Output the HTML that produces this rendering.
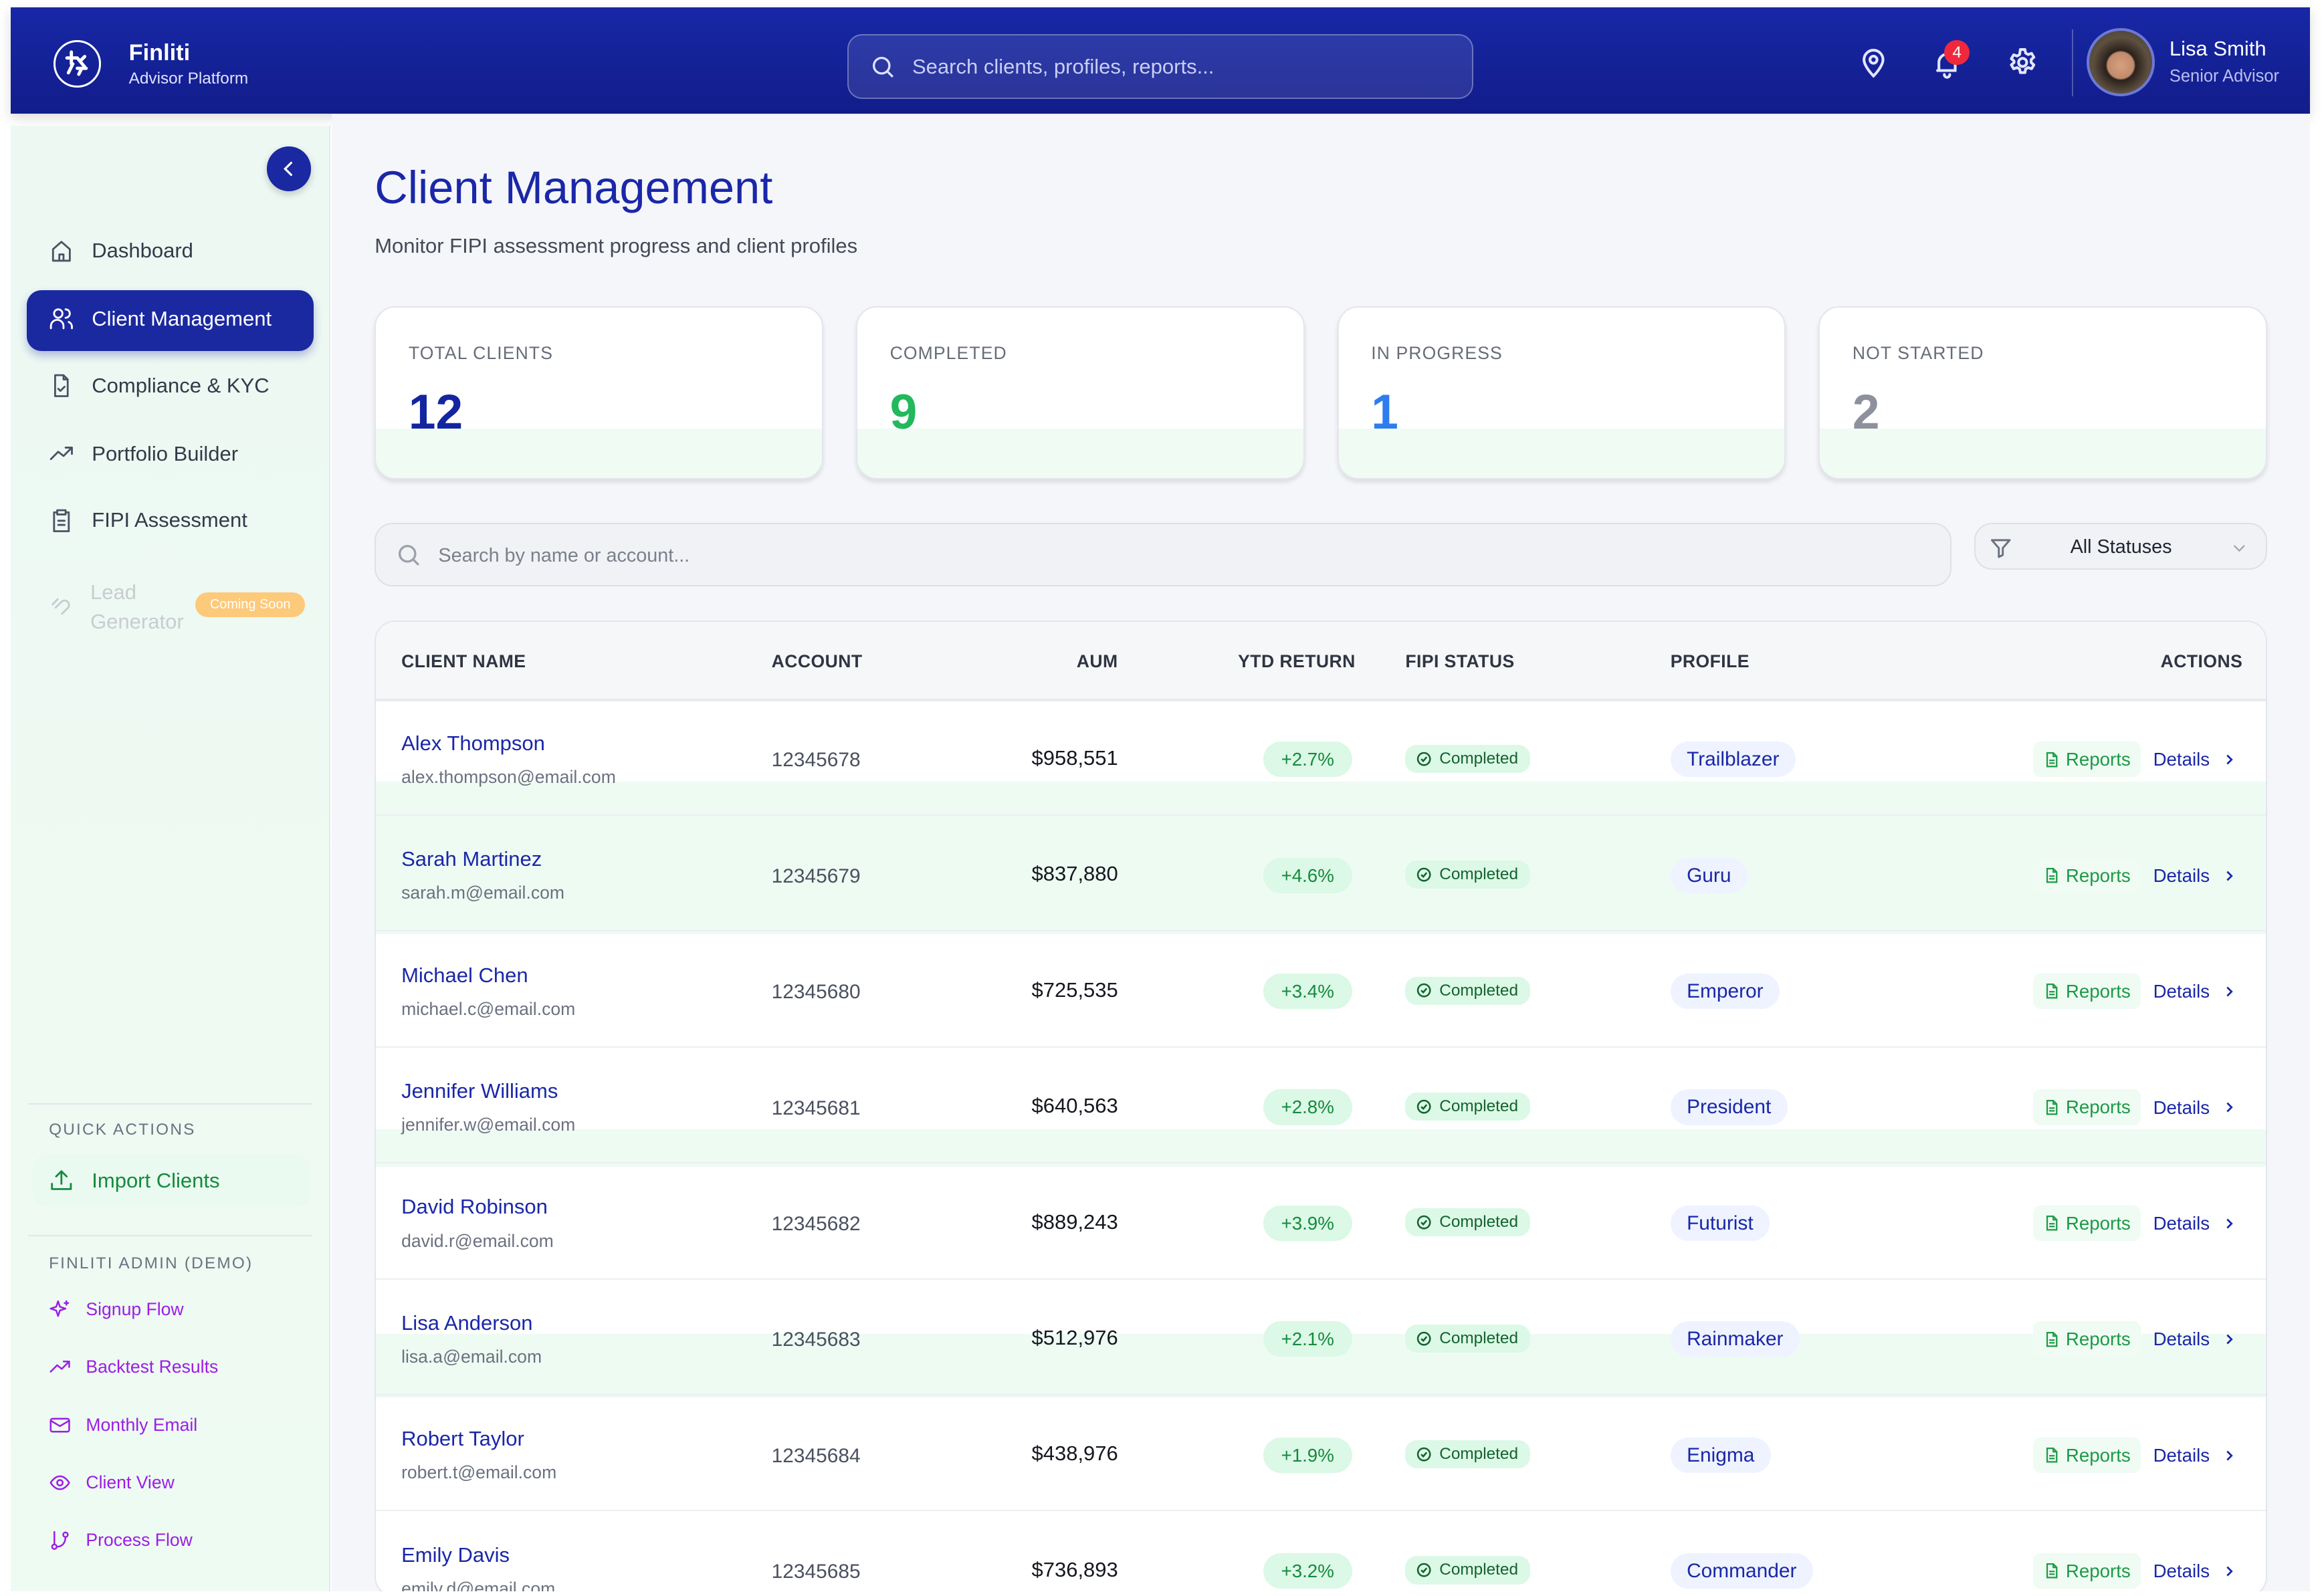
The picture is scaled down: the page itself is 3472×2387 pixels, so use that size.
<!DOCTYPE html>
<html><head><meta charset="utf-8"><style>
*{box-sizing:border-box;margin:0;padding:0}
html,body{width:3472px;height:2387px;overflow:hidden;background:#fff}
#r{zoom:2.21429;position:relative;width:1568px;height:1078px;font-family:"Liberation Sans",sans-serif;overflow:hidden}
.a{position:absolute}
.hdr{left:7px;top:5px;width:1553px;height:72px;background:linear-gradient(180deg,#1727a6,#121d8a);box-shadow:0 3px 8px rgba(0,0,0,.15)}
.side{left:7px;top:85px;width:216px;height:990px;background:linear-gradient(180deg,#edf8f3,#eefbf2);border-right:1px solid #e6e9ee}
.main{left:224px;top:77px;width:1336px;height:998px;background:#f5f6fa}
.nav{left:33px;font-size:14px;color:#333a48;display:flex;align-items:center;gap:12px}
.nav svg{width:17px;height:17px;fill:none;stroke:#4b5263;stroke-width:1.8;stroke-linecap:round;stroke-linejoin:round}
.adm{left:33px;font-size:12px;color:#9b1ee6;display:flex;align-items:center;gap:10px}
.adm svg{width:15px;height:15px;fill:none;stroke:#9b1ee6;stroke-width:1.8;stroke-linecap:round;stroke-linejoin:round}
.card{top:207px;width:303px;height:117px;border:1px solid #e3e6ec;border-radius:14px;background:linear-gradient(180deg,#fff 0,#fff 71%,#effbf3 71%);box-shadow:0 2px 3px rgba(0,0,0,.1);overflow:hidden}
.card .l{position:absolute;left:22px;top:24px;font-size:12px;color:#666c78;letter-spacing:.5px}
.card .n{position:absolute;left:22px;top:52px;font-size:33px;font-weight:bold}
.th{top:440px;font-size:12px;font-weight:bold;color:#2f3542;letter-spacing:.2px}
.row{left:254px;width:1276px;height:78px}
.nm{font-size:14px;color:#1a27a8}
.em{font-size:12px;color:#6b7180}
.ac{font-size:13.5px;color:#4b5060}
.aum{font-size:14px;color:#14171f}
.ytd{height:24px;border-radius:12px;background:#dcf8e6;color:#158a3e;font-size:12.5px;line-height:24px;text-align:center;width:60px}
.st{height:19px;border-radius:8px;background:#dcf8e6;color:#14632f;font-size:11px;line-height:19px;padding:0 8px 0 7px;display:flex;align-items:center;gap:5px}
.pf{height:24px;border-radius:12px;background:#eef3ff;color:#1a27a8;font-size:13.5px;line-height:24px;padding:0 11px}
.rp{height:24px;border-radius:5px;background:#effbf3;color:#1c9a46;font-size:12.5px;line-height:24px;padding:0 7px;display:flex;align-items:center;gap:4px}
.dt{font-size:12.5px;color:#1a27a8;display:flex;align-items:center;gap:8px}
</style></head><body><div id="r">
<div class="a hdr"></div>
<div class="a" style="left:36px;top:27px;width:32px;height:32px;border:1.5px solid #fff;border-radius:50%"></div>
<svg class="a" style="left:40px;top:31px" width="24" height="24" viewBox="0 0 24 24"><path d="M8 4v8M5 8h7M12 8l5 6M9 12l-3 6M14 10l3-3M12 15h6M15 15l-2 4" stroke="#fff" stroke-width="2.2" fill="none" stroke-linecap="round"/></svg>
<div class="a" style="left:87px;top:27px;font-size:15.5px;font-weight:bold;color:#fff">Finliti</div>
<div class="a" style="left:87px;top:47px;font-size:11px;color:#dfe3ff">Advisor Platform</div>
<div class="a" style="left:572px;top:23px;width:423px;height:44px;border:1px solid rgba(255,255,255,.3);background:rgba(255,255,255,.1);border-radius:10px"></div>
<svg class="a" style="left:587px;top:36px" width="18" height="18" viewBox="0 0 24 24" fill="none" stroke="#dfe3ff" stroke-width="2"><circle cx="11" cy="11" r="7"/><path d="M16 16l5 5"/></svg>
<div class="a" style="left:616px;top:37px;font-size:14px;color:#c9cef5">Search clients, profiles, reports...</div>
<svg class="a" style="left:1254px;top:31px" width="22" height="22" viewBox="0 0 24 24" fill="none" stroke="#e3e6ff" stroke-width="2" stroke-linecap="round"><path d="M12 22s7-7 7-12a7 7 0 0 0-14 0c0 5 7 12 7 12z"/><circle cx="12" cy="10" r="2.6"/></svg>
<svg class="a" style="left:1304px;top:32px" width="22" height="22" viewBox="0 0 24 24" fill="none" stroke="#e3e6ff" stroke-width="2" stroke-linecap="round"><path d="M6 17V11a6 6 0 0 1 12 0v6H5M10 20a2 2 0 0 0 4 0"/></svg>
<div class="a" style="left:1313px;top:27px;width:17px;height:17px;border-radius:50%;background:#f0283c;color:#fff;font-size:11px;text-align:center;line-height:17px">4</div>
<svg class="a" style="left:1355px;top:31px" width="22" height="22" viewBox="0 0 24 24" fill="none" stroke="#e3e6ff" stroke-width="2" stroke-linejoin="round"><circle cx="12" cy="12" r="3"/><path d="M10.3 2.5h3.4l.5 2.6 1.9 1.1 2.5-.9 1.7 2.9-2 1.7v2.2l2 1.7-1.7 2.9-2.5-.9-1.9 1.1-.5 2.6h-3.4l-.5-2.6-1.9-1.1-2.5.9-1.7-2.9 2-1.7V11l-2-1.7 1.7-2.9 2.5.9 1.9-1.1z"/></svg>
<div class="a" style="left:1399px;top:20px;width:1px;height:45px;background:rgba(255,255,255,.25)"></div>
<div class="a" style="left:1409px;top:19px;width:46px;height:46px;border-radius:50%;border:2px solid #6d79d6;background:radial-gradient(circle at 50% 55%,#d7a07f 0,#c08b6c 28%,#2a211c 32%,#5e5040 60%,#3d3a35 100%)"></div>
<div class="a" style="left:1465px;top:25px;font-size:14px;color:#fff">Lisa Smith</div>
<div class="a" style="left:1465px;top:45px;font-size:11.5px;color:#b9bff0">Senior Advisor</div>

<div class="a side"></div>
<div class="a" style="left:180px;top:99px;width:30px;height:30px;border-radius:50%;background:#1a28a2;box-shadow:0 2px 5px rgba(0,0,0,.2)"></div>
<svg class="a" style="left:188px;top:107px" width="14" height="14" viewBox="0 0 24 24" fill="none" stroke="#fff" stroke-width="2.5" stroke-linecap="round"><path d="M15 5l-7 7 7 7"/></svg>
<div class="a nav" style="top:161px"><svg viewBox="0 0 24 24"><path d="M4 21V10l8-7 8 7v11zM10 21v-6h4v6"/></svg>Dashboard</div>
<div class="a" style="left:18px;top:196px;width:194px;height:41px;border-radius:10px;background:#1b29a0;box-shadow:0 3px 6px rgba(27,41,160,.3)"></div>
<div class="a nav" style="top:207px;color:#fff"><svg viewBox="0 0 24 24" style="stroke:#fff"><circle cx="9" cy="7" r="4"/><path d="M2 21v-2a6 6 0 0 1 12 0v2M16 3a4 4 0 0 1 0 8M22 21v-2a5 5 0 0 0-3-4"/></svg>Client Management</div>
<div class="a nav" style="top:252px"><svg viewBox="0 0 24 24"><path d="M14 2H6v20h12V6zM14 2v4h4M9 15l2 2 4-4"/></svg>Compliance &amp; KYC</div>
<div class="a nav" style="top:298px"><svg viewBox="0 0 24 24"><path d="M2 17l7-7 5 4 8-8M16 6h6v6"/></svg>Portfolio Builder</div>
<div class="a nav" style="top:343px"><svg viewBox="0 0 24 24"><path d="M8 4H5v18h14V4h-3M8 2h8v4H8zM9 12h6M9 16h6"/></svg>FIPI Assessment</div>
<svg class="a" style="left:33px;top:400px" width="17" height="17" viewBox="0 0 24 24" fill="none" stroke="#c8ccd3" stroke-width="1.8"><path d="M6 15l6-6a4 4 0 0 1 6 6l-6 6M3 12l6-6"/></svg>
<div class="a" style="left:61px;top:390px;font-size:14px;line-height:20px;color:#c8ccd3">Lead<br>Generator</div>
<div class="a" style="left:132px;top:400px;width:74px;height:17px;border-radius:9px;background:#fdc97a;color:#fff;font-size:9px;text-align:center;line-height:17px">Coming Soon</div>
<div class="a" style="left:19px;top:745px;width:192px;height:1px;background:#e2e6ea"></div>
<div class="a" style="left:33px;top:757px;font-size:11px;color:#6b7180;letter-spacing:1px">QUICK ACTIONS</div>
<div class="a" style="left:22px;top:780px;width:188px;height:35px;border-radius:10px;background:#eafaf0"></div>
<div class="a nav" style="top:789px;color:#158a3e"><svg viewBox="0 0 24 24" style="stroke:#158a3e"><path d="M12 15V3M7 8l5-5 5 5M3 15v5h18v-5"/></svg>Import Clients</div>
<div class="a" style="left:19px;top:834px;width:192px;height:1px;background:#e2e6ea"></div>
<div class="a" style="left:33px;top:847px;font-size:11px;color:#6b7180;letter-spacing:1px">FINLITI ADMIN (DEMO)</div>
<div class="a adm" style="top:877px"><svg viewBox="0 0 24 24"><path d="M10 3l2 6 6 2-6 2-2 6-2-6-6-2 6-2zM19 3v4M17 5h4"/></svg>Signup Flow</div>
<div class="a adm" style="top:916px"><svg viewBox="0 0 24 24"><path d="M2 17l7-7 5 4 8-8M16 6h6v6"/></svg>Backtest Results</div>
<div class="a adm" style="top:955px"><svg viewBox="0 0 24 24"><rect x="2" y="5" width="20" height="14" rx="2"/><path d="M2 7l10 6 10-6"/></svg>Monthly Email</div>
<div class="a adm" style="top:994px"><svg viewBox="0 0 24 24"><path d="M2 12s4-7 10-7 10 7 10 7-4 7-10 7S2 12 2 12z"/><circle cx="12" cy="12" r="3"/></svg>Client View</div>
<div class="a adm" style="top:1033px"><svg viewBox="0 0 24 24"><circle cx="6" cy="19" r="2.5"/><circle cx="18" cy="6" r="2.5"/><path d="M6 3v13M8.5 19c6 0 9.5-4 9.5-10.5"/></svg>Process Flow</div>

<div class="a main"></div>
<div class="a" style="left:253px;top:109px;font-size:31px;color:#1a27a8">Client Management</div>
<div class="a" style="left:253px;top:158px;font-size:14px;color:#434956">Monitor FIPI assessment progress and client profiles</div>
<div class="a card" style="left:253px"><div class="l">TOTAL CLIENTS</div><div class="n" style="color:#1425a0">12</div></div>
<div class="a card" style="left:578px"><div class="l">COMPLETED</div><div class="n" style="color:#22b85c">9</div></div>
<div class="a card" style="left:903px"><div class="l">IN PROGRESS</div><div class="n" style="color:#2e7cf0">1</div></div>
<div class="a card" style="left:1228px"><div class="l">NOT STARTED</div><div class="n" style="color:#8c919c">2</div></div>
<div class="a" style="left:253px;top:353px;width:1065px;height:43px;border:1px solid #dde0e6;border-radius:12px;background:#f1f2f5"></div>
<svg class="a" style="left:267px;top:366px" width="18" height="18" viewBox="0 0 24 24" fill="none" stroke="#9ba0aa" stroke-width="2"><circle cx="11" cy="11" r="7"/><path d="M16 16l5 5"/></svg>
<div class="a" style="left:296px;top:368px;font-size:13px;color:#7a808c">Search by name or account...</div>
<div class="a" style="left:1333px;top:353px;width:198px;height:32px;border:1px solid #dde0e6;border-radius:12px;background:#f1f2f5"></div>
<svg class="a" style="left:1343px;top:362px" width="16" height="16" viewBox="0 0 24 24" fill="none" stroke="#6b7180" stroke-width="2" stroke-linejoin="round"><path d="M3 4h18l-7 8v7l-4 2v-9z"/></svg>
<div class="a" style="left:1398px;top:362px;font-size:13px;color:#1f2430">All Statuses</div>
<svg class="a" style="left:1506px;top:364px" width="12" height="12" viewBox="0 0 24 24" fill="none" stroke="#a0a5ae" stroke-width="2"><path d="M5 9l7 7 7-7"/></svg>

<div class="a" style="left:253px;top:419px;width:1278px;height:660px;border:1px solid #e3e6ec;border-radius:14px;background:#fff;overflow:hidden">
<div style="position:absolute;left:0;top:0;width:100%;height:54px;background:#f6f7f9;border-bottom:2px solid #e8eaee"></div>
<div style="position:absolute;left:0;top:108px;width:100%;height:103px;background:#eefbf3"></div>
<div style="position:absolute;left:0;top:343px;width:100%;height:25px;background:#eefbf3"></div>
<div style="position:absolute;left:0;top:481px;width:100%;height:43px;background:#eefbf3"></div>
</div>
<div class="a th" style="left:271px">CLIENT NAME</div>
<div class="a th" style="left:521px">ACCOUNT</div>
<div class="a th" style="left:727px">AUM</div>
<div class="a th" style="left:836px">YTD RETURN</div>
<div class="a th" style="left:949px">FIPI STATUS</div>
<div class="a th" style="left:1128px">PROFILE</div>
<div class="a th" style="left:1459px">ACTIONS</div>

<div id="rows"></div>
<script>
var d=[["Alex Thompson","alex.thompson@email.com","12345678","$958,551","+2.7%","Trailblazer"],
["Sarah Martinez","sarah.m@email.com","12345679","$837,880","+4.6%","Guru"],
["Michael Chen","michael.c@email.com","12345680","$725,535","+3.4%","Emperor"],
["Jennifer Williams","jennifer.w@email.com","12345681","$640,563","+2.8%","President"],
["David Robinson","david.r@email.com","12345682","$889,243","+3.9%","Futurist"],
["Lisa Anderson","lisa.a@email.com","12345683","$512,976","+2.1%","Rainmaker"],
["Robert Taylor","robert.t@email.com","12345684","$438,976","+1.9%","Enigma"],
["Emily Davis","emily.d@email.com","12345685","$736,893","+3.2%","Commander"]];
var h="";
d.forEach(function(r,i){var c=513+i*78.3;
h+='<div class="a row" style="top:'+(c-40)+'px;border-bottom:1px solid #eceef1;height:78px"></div>';
h+='<div class="a nm" style="left:271px;top:'+(c-19)+'px">'+r[0]+'</div>';
h+='<div class="a em" style="left:271px;top:'+(c+5)+'px">'+r[1]+'</div>';
h+='<div class="a ac" style="left:521px;top:'+(c-7)+'px">'+r[2]+'</div>';
h+='<div class="a aum" style="right:813px;top:'+(c-9)+'px">'+r[3]+'</div>';
h+='<div class="a ytd" style="left:853px;top:'+(c-12)+'px">'+r[4]+'</div>';
h+='<div class="a st" style="left:949px;top:'+(c-10)+'px"><svg width="11" height="11" viewBox="0 0 24 24" fill="none" stroke="#14632f" stroke-width="2.5"><circle cx="12" cy="12" r="9"/><path d="M8 12l3 3 5-6"/></svg>Completed</div>';
h+='<div class="a pf" style="left:1128px;top:'+(c-12)+'px">'+r[5]+'</div>';
h+='<div class="a rp" style="left:1373px;top:'+(c-12)+'px"><svg width="11" height="12" viewBox="0 0 24 24" fill="none" stroke="#1c9a46" stroke-width="2.2"><path d="M14 2H5v20h14V7zM14 2v5h5M8 13h8M8 17h8"/></svg>Reports</div>';
h+='<div class="a dt" style="left:1454px;top:'+(c-7)+'px">Details<svg width="10" height="10" viewBox="0 0 24 24" fill="none" stroke="#1a27a8" stroke-width="3"><path d="M9 5l7 7-7 7"/></svg></div>';
});
document.getElementById("rows").outerHTML=h;
</script>
<div class="a" style="left:0;top:1075px;width:1568px;height:3px;background:#fff"></div>
</div></body></html>
